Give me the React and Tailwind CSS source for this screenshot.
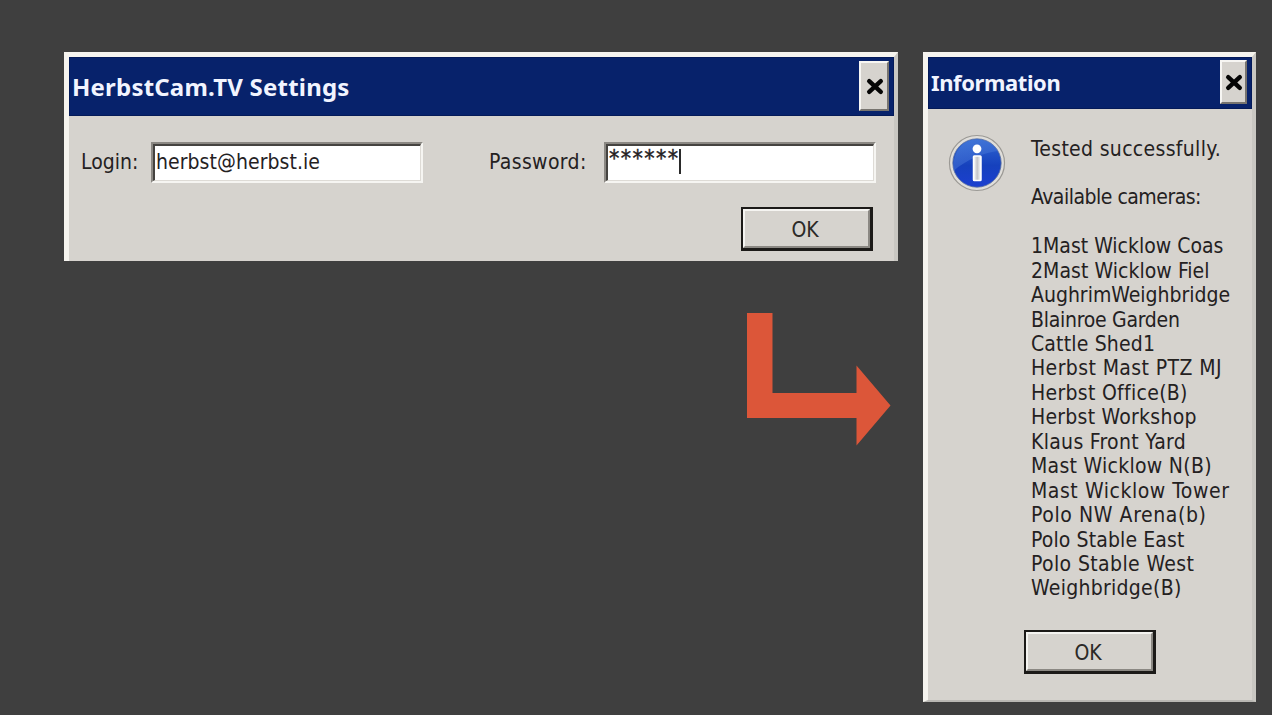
const cameras = [
  ['1Mast Wicklow Coas', 'tracking-[0px]'],
  ['2Mast Wicklow Fiel', 'tracking-[0.05px]'],
  ['AughrimWeighbridge', 'tracking-[0px]'],
  ['Blainroe Garden', 'tracking-[-0.27px]'],
  ['Cattle Shed1', 'tracking-[0.17px]'],
  ['Herbst Mast PTZ MJ', 'tracking-[0.4px]'],
  ['Herbst Office(B)', 'tracking-[0.3px]'],
  ['Herbst Workshop', 'tracking-[0.25px]'],
  ['Klaus Front Yard', 'tracking-[0.3px]'],
  ['Mast Wicklow N(B)', 'tracking-[0.28px]'],
  ['Mast Wicklow Tower', 'tracking-[0.55px]'],
  ['Polo NW Arena(b)', 'tracking-[0.6px]'],
  ['Polo Stable East', 'tracking-[0.12px]'],
  ['Polo Stable West', 'tracking-[0.38px]'],
  ['Weighbridge(B)', 'tracking-[0.28px]'],
];

function TitleBar({ title, className, titleClass, closeClass }) {
  return (
    <header className={`flex items-start justify-between bg-[#07226b] shadow-[inset_0_0_0_1px_#041a58] ${className}`}>
      <h1 className={`font-['Noto_Sans',sans-serif] font-bold whitespace-nowrap text-[#f1f4ff] ${titleClass}`}>{title}</h1>
      <button
        aria-label="Close"
        className={`flex shrink-0 items-center justify-center border-2 border-t-[#f7f6f3] border-r-[#77746f] border-b-[#77746f] border-l-[#f7f6f3] bg-[#d6d3ce] ${closeClass}`}
      >
        <svg viewBox="0 0 18 17" className="ml-px h-[17px] w-[18px]" fill="none" stroke="#050505" strokeWidth="4.4" strokeLinecap="round">
          <path d="M3.2 3.2 L14.8 13.8 M14.8 3.2 L3.2 13.8" />
        </svg>
      </button>
    </header>
  );
}

function OkButton() {
  return (
    <button className="h-[44px] w-[132px] border-2 border-r-[3px] border-b-[3px] border-[#1c1a18]">
      <span className="flex h-full w-full items-center justify-center border-2 border-t-[#f5f4f1] border-r-[#8b8883] border-b-[#8b8883] border-l-[#f5f4f1] bg-[#d6d3ce] pt-[4px] pr-[3px] text-[21px] tracking-[-0.2px] text-[#2b2927]">
        OK
      </span>
    </button>
  );
}

function Field({ children }) {
  return (
    <div className="h-[41px] w-[272px] border-2 border-t-[#8b8883] border-r-[#f6f5f2] border-b-[#f6f5f2] border-l-[#8b8883]">
      <div className="flex h-full w-full items-start border-t-2 border-r border-b border-l-2 border-t-[#454340] border-r-[#dedbd6] border-b-[#dedbd6] border-l-[#454340] bg-white leading-[32px]">
        {children}
      </div>
    </div>
  );
}

function InfoIcon() {
  return (
    <svg viewBox="0 0 58 58" className="h-[58px] w-[58px] shrink-0">
      <defs>
        <linearGradient id="ball" x1="0" y1="0" x2="0" y2="1">
          <stop offset="0" stopColor="#2f67d2" />
          <stop offset="0.55" stopColor="#1641bd" />
          <stop offset="1" stopColor="#1c3fd0" />
        </linearGradient>
        <linearGradient id="gloss" x1="0" y1="0" x2="1" y2="1">
          <stop offset="0" stopColor="#5b8be0" />
          <stop offset="1" stopColor="#3e6cd3" />
        </linearGradient>
        <linearGradient id="stem" x1="0" y1="0" x2="1" y2="0">
          <stop offset="0" stopColor="#fff" />
          <stop offset="0.5" stopColor="#c4c4c8" />
          <stop offset="1" stopColor="#fff" />
        </linearGradient>
      </defs>
      <circle cx="29" cy="29" r="27.5" fill="#e0deda" stroke="#9b9995" strokeWidth="1.2" />
      <circle cx="29" cy="29" r="24.2" fill="url(#ball)" stroke="#5d719e" strokeWidth="0.8" />
      <path d="M5.5 37 C4 16 16 5.500 29 5.500 C40 5.500 47 11 50 17 C38 18 17 26 5.500 37Z" fill="url(#gloss)" opacity="0.45" />
      <circle cx="29" cy="14.8" r="4.4" fill="#fff" />
      <rect x="25.500" y="22" width="7.500" height="24.500" rx="0.8" fill="url(#stem)" stroke="#fff" strokeWidth="1.5" />
    </svg>
  );
}

export default function App() {
  return (
    <main className="flex h-[715px] w-[1272px] items-start overflow-hidden bg-[#3f3f3f] pt-[52px] pl-[64px] font-['DejaVu_Sans_Condensed','DejaVu_Sans',sans-serif] text-[21px] font-stretch-condensed text-[#24211f]">
      <div className="flex w-[859px] flex-col">
        <section className="h-[209px] w-[834px] border-t-[5px] border-r-[4px] border-l-[5px] border-t-[#f6f4ef] border-r-[#c9c7c2] border-l-[#f6f4ef] bg-[#d6d3ce]">
          <TitleBar
            title="HerbstCam.TV Settings"
            className="h-[59px] pr-[5px] pl-[3px]"
            titleClass="pt-[14px] text-[24px] leading-[32px] tracking-[0.2px]"
            closeClass="mt-1 h-[50px] w-[30px]"
          />
          <div className="flex items-start pt-[26px] pl-[12px]">
            <label className="w-[70px] leading-[40px]">Login:</label>
            <Field>
              <span className="pl-px tracking-[0.06px]">herbst@herbst.ie</span>
            </Field>
            <label className="ml-[66px] w-[115px] leading-[40px] tracking-[0.35px]">Password:</label>
            <Field>
              <span className="h-[30px] pl-px text-[23px] leading-[25px] tracking-[1.4px] [-webkit-text-stroke:0.4px_#24211f]">******</span>
              <span className="mt-[3px] h-[25px] w-[2px] bg-[#2a2a2a]" />
            </Field>
          </div>
          <div className="flex justify-end pt-[24px] pr-[21px]">
            <OkButton />
          </div>
        </section>
        <svg viewBox="0 0 144 134" className="mt-[51px] ml-[683px] h-[134px] w-[144px]">
          <path d="M0 1H25.5V81H109.500V53.500L143.500 93.500L109.500 133.500V106H0Z" fill="#dc5639" />
        </svg>
      </div>
      <section className="h-[650px] w-[333px] border-t-[5px] border-r-[4px] border-b-2 border-l-[5px] border-t-[#f6f4ef] border-r-[#c9c7c2] border-b-[#b9b7b3] border-l-[#f6f4ef] bg-[#d6d3ce]">
        <TitleBar
          title="Information"
          className="h-[52px] pr-[5px] pl-[3px]"
          titleClass="pt-[9px] text-[22px] leading-[32px] tracking-[-0.4px]"
          closeClass="mt-[3px] h-[44px] w-[27px]"
        />
        <div className="flex items-start pl-[20px]">
          <div className="mt-[25px]">
            <InfoIcon />
          </div>
          <div className="pt-[27.5px] pl-[25px] leading-[24.44px] whitespace-nowrap">
            <p className="tracking-[0.32px]">Tested successfully.</p>
            <p className="mt-[24.44px] tracking-[-0.5px]">Available cameras:</p>
            <ul className="mt-[24.44px]">
              {cameras.map(([name, spacing]) => (
                <li key={name} className={spacing}>{name}</li>
              ))}
            </ul>
          </div>
        </div>
        <div className="pt-[29.5px] pl-[96px]">
          <OkButton />
        </div>
      </section>
    </main>
  );
}
